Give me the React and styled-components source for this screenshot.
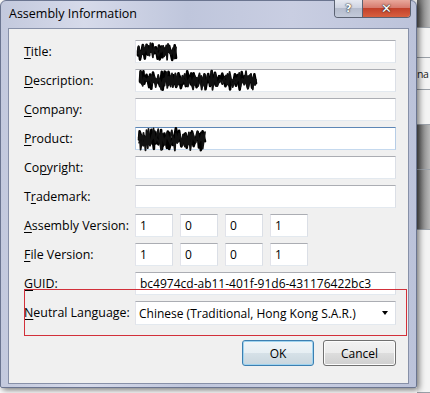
import React from 'react'
import styled, { createGlobalStyle } from 'styled-components'

const GlobalStyle = createGlobalStyle`
  html, body { margin: 0; padding: 0; background: #fff; }
  body { font-family: "Open Sans", "Noto Sans", sans-serif; }
`

const Desktop = styled.div`
  display: flex;
  width: 430px;
  height: 393px;
  overflow: hidden;
  background: #fff;
`

const Window = styled.div`
  position: relative;
  z-index: 1;
  flex-shrink: 0;
  width: 417px;
  height: 388px;
  box-sizing: border-box;
  border: 1px solid #6b7590;
  border-radius: 6px 6px 2px 2px;
  background: linear-gradient(90deg, #c3c9dd 0%, #d6daea 20%, #bfc6dc 45%, #c9cee2 70%, #bcc3da 100%);
  box-shadow: 2px 2px 6px rgba(0, 0, 0, 0.55);
`

const TitleBar = styled.div`
  display: flex;
  align-items: flex-start;
  height: 27px;
  padding-left: 8px;
`

const TitleText = styled.div`
  font-size: 12.5px;
  line-height: 26px;
  color: #000;
`

const CaptionButtons = styled.div`
  display: flex;
  margin-left: auto;
  margin-right: 5px;
  margin-top: -1px;
  border: 1px solid #5b6272;
  border-top: none;
  border-radius: 0 0 4px 4px;
  overflow: hidden;
`

const CaptionButton = styled.div`
  width: ${p => p.$w}px;
  height: 17px;
  display: flex;
  align-items: center;
  justify-content: center;
  font-family: "DejaVu Sans", sans-serif;
  font-weight: bold;
  font-size: ${p => p.$close ? 13 : 11}px;
  color: #fff;
  text-shadow: 0 0 2px #333, 0 0 1px #000;
  background: ${p => p.$close
    ? 'linear-gradient(#e8a89c 0%, #d77b6e 45%, #c2412b 50%, #d8603f 100%)'
    : 'linear-gradient(#e6e9f1 0%, #cfd4e2 45%, #b5bccd 50%, #c3cad9 100%)'};
  & + & { border-left: 1px solid #5b6272; }
`

const Client = styled.div`
  position: relative;
  margin: 0 7px;
  height: 356px;
  box-sizing: border-box;
  border: 1px solid #8790a8;
  background: #f0f0f0;
  padding: 11px 12px 0 14px;
`

const Form = styled.div`
  display: grid;
  grid-template-columns: 112px 261px;
  grid-auto-rows: 23px;
  row-gap: 6px;
  align-items: center;
`

const Label = styled.div`
  font-size: 12.4px;
  color: #000;
  white-space: nowrap;
  padding-left: 1px;
  u { text-decoration-thickness: 1px; text-underline-offset: 2px; }
`

const TextBox = styled.div`
  position: relative;
  width: ${p => p.$w ? `${p.$w}px` : '100%'};
  height: 23px;
  box-sizing: border-box;
  border: 1px solid;
  border-color: ${p => p.$focus ? '#5d86b5 #b7cde6 #c5d9ee #b7cde6' : '#abadb3 #dbdfe6 #e3e9ef #e2e3ea'};
  background: #fff;
  padding: 0 4px;
  display: flex;
  align-items: center;
  font-size: 12px;
  color: #000;
  white-space: nowrap;
  overflow: visible;
`

const VersionRow = styled.div`
  display: flex;
  gap: 7px;
`

const Select = styled.div`
  height: 24px;
  margin-top: 1px;
  box-sizing: border-box;
  border: 1px solid;
  border-color: #abadb3 #dbdfe6 #e3e9ef #e2e3ea;
  background: #fff;
  display: flex;
  align-items: center;
  padding: 0 7px 0 3px;
  font-size: 12px;
  color: #000;
`

const Arrow = styled.span`
  margin-left: auto;
  width: 0;
  height: 0;
  border-left: 3.5px solid transparent;
  border-right: 3.5px solid transparent;
  border-top: 4px solid #000;
`

const Buttons = styled.div`
  display: flex;
  justify-content: flex-end;
  gap: 9px;
  margin-top: 16px;
`

const Button = styled.div`
  width: ${p => p.$w}px;
  height: 26px;
  box-sizing: border-box;
  border: 1px solid ${p => p.$default ? '#3c7fb1' : '#707070'};
  border-radius: 3px;
  background: ${p => p.$default
    ? 'linear-gradient(#f0f5f8 0%, #e6eef3 50%, #d6e1e8 50%, #c9d6de 100%)'
    : 'linear-gradient(#f2f2f2 0%, #ebebeb 50%, #dddddd 50%, #cfcfcf 100%)'};
  box-shadow: inset 0 0 0 1px ${p => p.$default ? '#9fd3ef' : '#fcfcfc'};
  display: flex;
  align-items: center;
  justify-content: center;
  font-size: 12px;
  color: #000;
`

const Annotation = styled.div`
  position: absolute;
  left: 15px;
  top: 260px;
  width: 383px;
  height: 47px;
  box-sizing: border-box;
  border: 1px solid #d2303a;
  pointer-events: none;
`

const Backdrop = styled.div`
  flex: 1;
  display: flex;
  flex-direction: column;
  background: linear-gradient(90deg, #5e5e5e 0%, #9a9a9a 60%, #b9b9b9 100%);
`

const BackdropCell = styled.div`
  height: ${p => p.$h}px;
  box-sizing: border-box;
  border-bottom: 1px solid #9aa0a8;
  background: ${p => p.$light ? '#f4f4f4' : 'transparent'};
  font-size: 10.5px;
  letter-spacing: -0.4px;
  line-height: ${p => p.$h}px;
  color: #222;
  white-space: nowrap;
`

const ScribbleSvg = styled.svg`
  position: absolute;
  left: ${p => p.$x}px;
  top: ${p => p.$y}px;
  overflow: visible;
`

function rng(seed) {
  let s = seed
  return () => {
    s = (s * 16807) % 2147483647
    return s / 2147483647
  }
}

function scribblePath(w, h, seed) {
  const r = rng(seed)
  let d = `M1 ${h / 2}`
  let x = 1
  let up = true
  while (x < w - 1) {
    x += 0.6 + r() * 2.6
    const band = 0.15 + 0.45 * Math.abs(Math.sin(x * 0.21 + seed))
    const y = up ? r() * h * band : h - r() * h * band
    d += ` L${Math.min(x, w - 1).toFixed(1)} ${y.toFixed(1)}`
    up = !up
  }
  x = w - 1
  up = true
  while (x > 1) {
    x -= 1 + r() * 3
    const y = up ? h * 0.2 + r() * h * 0.3 : h * 0.8 - r() * h * 0.3
    d += ` L${Math.max(x, 1).toFixed(1)} ${y.toFixed(1)}`
    up = !up
  }
  return d
}

function Scribble({ x, y, w, h, seed }) {
  return (
    <ScribbleSvg $x={x} $y={y} width={w} height={h} viewBox={`0 0 ${w} ${h}`}>
      <path d={scribblePath(w, h, seed)} fill="none" stroke="#000" strokeWidth="2.6" strokeLinejoin="round" strokeLinecap="round" />
      <path d={scribblePath(w, h, seed + 77)} fill="none" stroke="#111" strokeWidth="1.8" strokeLinejoin="round" />
    </ScribbleSvg>
  )
}

const versions = [
  { label: <><u>A</u>ssembly Version:</>, parts: ['1', '0', '0', '1'] },
  { label: <><u>F</u>ile Version:</>, parts: ['1', '0', '0', '1'] },
]

export default function App() {
  return (
    <>
      <GlobalStyle />
      <Desktop>
        <Window>
          <TitleBar>
            <TitleText>Assembly Information</TitleText>
            <CaptionButtons>
              <CaptionButton $w={27}>?</CaptionButton>
              <CaptionButton $w={47} $close>✕</CaptionButton>
            </CaptionButtons>
          </TitleBar>
          <Client>
            <Form>
              <Label><u>T</u>itle:</Label>
              <TextBox><Scribble x={1} y={2} w={40} h={17} seed={11} /></TextBox>

              <Label><u>D</u>escription:</Label>
              <TextBox><Scribble x={3} y={1} w={118} h={19} seed={23} /></TextBox>

              <Label><u>C</u>ompany:</Label>
              <TextBox />

              <Label><u>P</u>roduct:</Label>
              <TextBox $focus><Scribble x={2} y={0} w={68} h={23} seed={41} /></TextBox>

              <Label>Co<u>p</u>yright:</Label>
              <TextBox />

              <Label>T<u>r</u>ademark:</Label>
              <TextBox />

              {versions.map((v, i) => (
                <React.Fragment key={i}>
                  <Label>{v.label}</Label>
                  <VersionRow>
                    {v.parts.map((p, j) => (
                      <TextBox key={j} $w={38}>{p}</TextBox>
                    ))}
                  </VersionRow>
                </React.Fragment>
              ))}

              <Label><u>G</u>UID:</Label>
              <TextBox>bc4974cd-ab11-401f-91d6-431176422bc3</TextBox>

              <Label><u>N</u>eutral Language:</Label>
              <Select>
                Chinese (Traditional, Hong Kong S.A.R.)
                <Arrow />
              </Select>
            </Form>
            <Buttons>
              <Button $w={72} $default>OK</Button>
              <Button $w={73}>Cancel</Button>
            </Buttons>
            <Annotation />
          </Client>
        </Window>
        <Backdrop>
          <BackdropCell $h={28} />
          <BackdropCell $h={30} $light />
          <BackdropCell $h={32} $light>na</BackdropCell>
          <BackdropCell $h={35} $light />
          <BackdropCell $h={45} />
          <BackdropCell $h={60} />
          <BackdropCell $h={163} $light />
        </Backdrop>
      </Desktop>
    </>
  )
}
